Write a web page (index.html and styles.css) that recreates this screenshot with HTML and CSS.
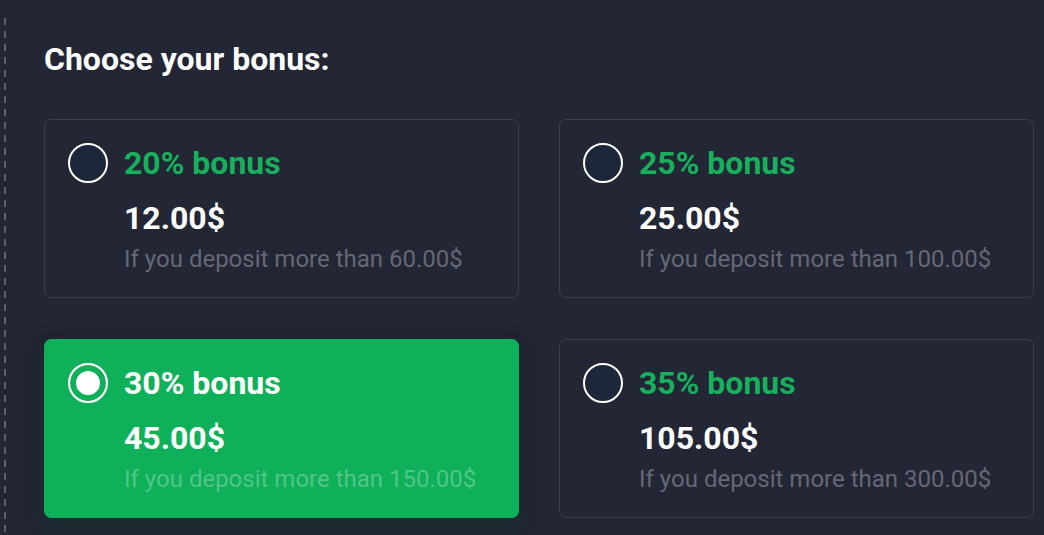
FILE: index.html
```html
<!DOCTYPE html>
<html lang="en">
  <head>
    <meta charset="UTF-8" />
    <meta name="viewport" content="width=device-width, initial-scale=1.0" />
    <title>Choose your bonus</title>
    <link rel="stylesheet" href="styles.css">
  </head>
  <body>
    <div class="page">
      <div class="rail"></div>

      <div class="container">
        <h2>Choose your bonus:</h2>

        <!-- bonus options -->
        <div class="bonus-grid">
          <label class="bonus-card">
            <span class="radio"></span>
            <div class="bonus-info">
              <div class="bonus-title">20% bonus</div>
              <div class="bonus-amount">12.00$</div>
              <div class="bonus-note">If you deposit more than 60.00$</div>
            </div>
          </label>

          <label class="bonus-card">
            <span class="radio"></span>
            <div class="bonus-info">
              <div class="bonus-title">25% bonus</div>
              <div class="bonus-amount">25.00$</div>
              <div class="bonus-note">If you deposit more than 100.00$</div>
            </div>
          </label>

          <label class="bonus-card active">
            <span class="radio"></span>
            <div class="bonus-info">
              <div class="bonus-title">30% bonus</div>
              <div class="bonus-amount">45.00$</div>
              <div class="bonus-note">If you deposit more than 150.00$</div>
            </div>
          </label>

          <label class="bonus-card">
            <span class="radio"></span>
            <div class="bonus-info">
              <div class="bonus-title">35% bonus</div>
              <div class="bonus-amount">105.00$</div>
              <div class="bonus-note">If you deposit more than 300.00$</div>
            </div>
          </label>
        </div>
      </div>
    </div>
  </body>
</html>
```

FILE: styles.css
```css
body {
  font-family: Roboto, "Liberation Sans", Arial, sans-serif;
  margin: 0;
  height: 100vh;
  overflow: hidden;
  background-color: #232634;
  color: #fff;
}
.page {
  display: flex;
  height: 100%;
}
.rail {
  flex: 0 0 2px;
  margin-left: 4px;
  margin-top: 18px;
  background: repeating-linear-gradient(to bottom, #5b5e6b 0 7px, transparent 7px 13px);
}
.container {
  flex: 1;
  padding: 0 10px 0 38px;
}
h2 {
  margin: 40px 0 41px;
  font-size: 32px;
  line-height: 38px;
  font-weight: 700;
  color: #fff;
}
.bonus-grid {
  display: grid;
  grid-template-columns: 475px 475px;
  column-gap: 40px;
  row-gap: 41px;
}
.bonus-card {
  display: flex;
  gap: 16px;
  height: 179px;
  box-sizing: border-box;
  padding: 23px 23px 0;
  border: 1px solid #3b3e4d;
  border-radius: 7px;
  cursor: pointer;
}
.radio {
  flex: 0 0 40px;
  width: 40px;
  height: 40px;
  box-sizing: border-box;
  border: 2px solid #fff;
  border-radius: 50%;
  background-color: #1e2739;
}
.bonus-title {
  font-size: 32px;
  line-height: 40px;
  font-weight: 700;
  color: #17b05c;
}
.bonus-amount {
  margin-top: 17px;
  font-size: 32px;
  line-height: 36px;
  font-weight: 700;
}
.bonus-note {
  margin-top: 9px;
  font-size: 24px;
  line-height: 28px;
  color: #656877;
}
.bonus-card.active {
  background-color: #0fb05a;
  border-color: #0fb05a;
  box-shadow: 0 4px 22px rgba(0, 0, 0, 0.22), 0 8px 20px rgba(16, 176, 90, 0.12);
}
.bonus-card.active .radio {
  background-color: #fff;
  box-shadow: inset 0 0 0 6px #0fb05a;
}
.bonus-card.active .bonus-title {
  color: #fff;
}
.bonus-card.active .bonus-note {
  color: rgba(255, 255, 255, 0.28);
}
```
